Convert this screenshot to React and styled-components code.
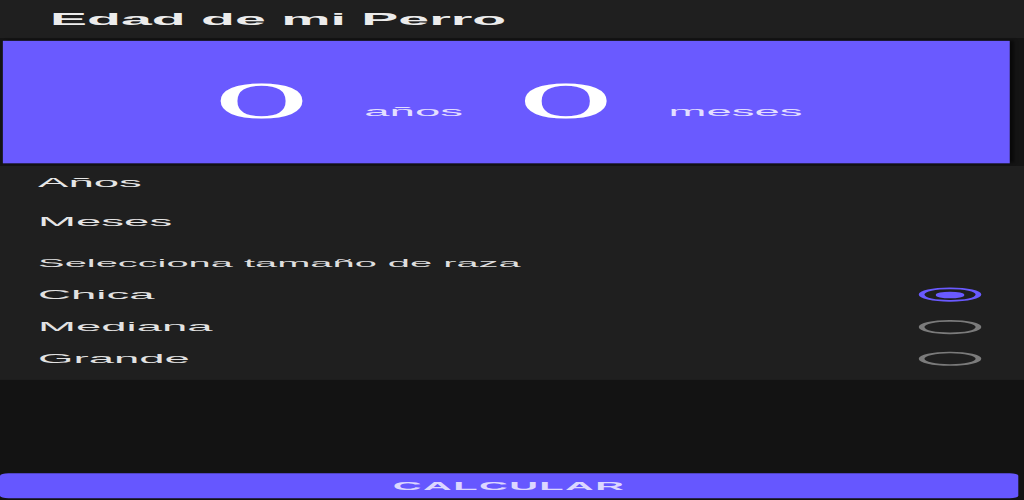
import React, { useState } from 'react';
import styled, { createGlobalStyle } from 'styled-components';

// phone layout is 360x600, stretched to fill the 1024x500 window
const GlobalStyle = createGlobalStyle`
  html, body {
    margin: 0;
    padding: 0;
    background: #131313;
    overflow: hidden;
  }
  * { box-sizing: border-box; }
`;

const Viewport = styled.div`
  width: 1024px;
  height: 500px;
  overflow: hidden;
`;

const Screen = styled.div`
  width: 360px;
  height: 600px;
  display: flex;
  flex-direction: column;
  background: #131313;
  font-family: "Liberation Sans", Arial, sans-serif;
  transform: scale(2.8444, 0.8333);
  transform-origin: 0 0;
`;

const AppBar = styled.header`
  height: 45.6px;
  flex-shrink: 0;
  background: #1f1f1f;
  padding: 10.6px 0 0 17.6px;
`;

const Title = styled.h1`
  margin: 0;
  font-size: 19.5px;
  line-height: 24px;
  font-weight: 700;
  color: #ececec;
`;

const CardTray = styled.div`
  flex-shrink: 0;
  padding: 3.6px 0;
  background: #141414;
`;

const AgeCard = styled.section`
  height: 146.4px;
  margin: 0 5px 0 1px;
  padding-top: 15px;
  background: #6a5aff;
  box-shadow: 1.5px 0 2px rgba(0, 0, 0, 0.55);
  display: flex;
  align-items: center;
  justify-content: center;
`;

const Readout = styled.div`
  line-height: 62px;
  white-space: nowrap;
`;

const Figure = styled.span`
  font-family: "DejaVu Serif", "Liberation Serif", serif;
  font-size: 57px;
  color: #ffffff;
  margin: 0 9px;
`;

const Unit = styled.span`
  font-size: 16px;
  color: #e2dfff;
  margin: 0 9px;
  vertical-align: 3px;
`;

const Form = styled.div`
  height: 256.8px;
  flex-shrink: 0;
  background: #1f1f1f;
  padding: 0 15.2px 0 13.4px;
  display: flex;
  flex-direction: column;
`;

const Field = styled.input`
  display: block;
  width: 100%;
  height: 45.6px;
  padding: 0 0 3.8px 0;
  border: none;
  outline: none;
  background: transparent;
  font-family: inherit;
  font-size: 16px;
  line-height: 20px;
  color: #ececec;

  &::placeholder {
    color: #e6e6e6;
    opacity: 1;
  }
`;

const SectionLabel = styled.div`
  margin-top: 16.8px;
  font-size: 14px;
  line-height: 18px;
  color: #dedede;
`;

const Options = styled.div`
  margin-top: 9.1px;
  display: flex;
  flex-direction: column;
`;

const OptionRow = styled.label`
  height: 38.6px;
  display: flex;
  align-items: center;
  justify-content: space-between;
  cursor: pointer;
`;

const OptionLabel = styled.span`
  font-size: 16px;
  line-height: 20px;
  color: #e2e2e2;
`;

const Radio = styled.span`
  width: 21.5px;
  height: 17px;
  border-radius: 50%;
  border: 2.2px solid ${({ checked }) => (checked ? '#6a5aff' : '#7b7b7b')};
  display: flex;
  align-items: center;
  justify-content: center;

  &::after {
    content: '';
    width: 10.5px;
    height: 8px;
    border-radius: 50%;
    background: #6a5aff;
    display: ${({ checked }) => (checked ? 'block' : 'none')};
  }
`;

const Filler = styled.div`
  flex: 1;
  background: #131313;
`;

const CalcButton = styled.button`
  flex-shrink: 0;
  height: 30px;
  width: 358px;
  margin: 0 2px 2.4px 0;
  border: none;
  border-radius: 3px;
  background: #6657ff;
  color: #dcd7ff;
  font-family: inherit;
  font-size: 14px;
  line-height: 18px;
  font-weight: 700;
  letter-spacing: 0.5px;
  cursor: pointer;
`;

const sizes = ['Chica', 'Mediana', 'Grande'];

const App = () => {
  const [years, setYears] = useState('');
  const [months, setMonths] = useState('');
  const [size, setSize] = useState('Chica');

  return (
    <Viewport>
      <GlobalStyle />
      <Screen>
        <AppBar>
          <Title>Edad de mi Perro</Title>
        </AppBar>

        <CardTray>
          <AgeCard>
            <Readout>
              <Figure>0</Figure>
              <Unit>años</Unit>
              <Figure>0</Figure>
              <Unit>meses</Unit>
            </Readout>
          </AgeCard>
        </CardTray>

        <Form>
          <Field placeholder="Años" value={years} onChange={(e) => setYears(e.target.value)} />
          <Field placeholder="Meses" value={months} onChange={(e) => setMonths(e.target.value)} />
          <SectionLabel>Selecciona tamaño de raza</SectionLabel>
          <Options>
            {sizes.map((s) => (
              <OptionRow key={s} onClick={() => setSize(s)}>
                <OptionLabel>{s}</OptionLabel>
                <Radio checked={size === s} />
              </OptionRow>
            ))}
          </Options>
        </Form>

        <Filler />
        <CalcButton>CALCULAR</CalcButton>
      </Screen>
    </Viewport>
  );
};

export default App;
